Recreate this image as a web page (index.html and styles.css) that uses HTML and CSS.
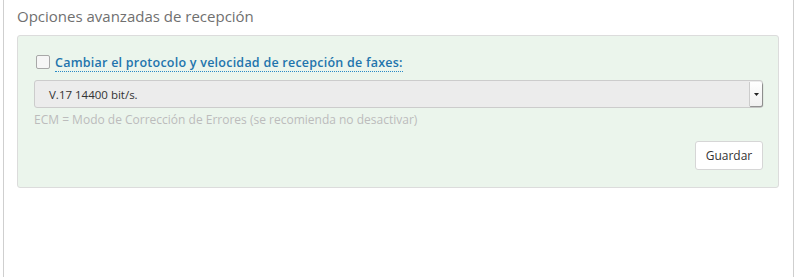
FILE: index.html
```html
<!DOCTYPE html>
<html lang="es">
<head>
<meta charset="utf-8">
<link rel="stylesheet" href="styles.css">
</head>
<body>
<div class="panel">
  <h3 class="title">Opciones avanzadas de recepción</h3>
  <div class="well">
    <div class="check-row">
      <span class="checkbox"></span>
      <span class="label">Cambiar el protocolo y velocidad de recepción de faxes:</span>
    </div>
    <div class="select">
      <span class="select-value">V.17 14400 bit/s.</span>
      <span class="select-btn"><svg width="5" height="3" viewBox="0 0 5 3"><path d="M0 0H5L2.5 3Z" fill="#222"/></svg></span>
    </div>
    <p class="help">ECM = Modo de Corrección de Errores (se recomienda no desactivar)</p>
    <div class="actions">
      <button class="btn">Guardar</button>
    </div>
  </div>
</div>
</body>
</html>
```
FILE: styles.css
```css
html, body {
  margin: 0;
  padding: 0;
  background: #fff;
  font-family: "Open Sans", "Liberation Sans", sans-serif;
}
.panel {
  margin-left: 3px;
  width: 791px;
  height: 277px;
  border-left: 1px solid #cfcfcf;
  border-right: 1px solid #cfcfcf;
  padding: 0 13px;
  box-sizing: border-box;
}
.title {
  margin: 0;
  padding-top: 6px;
  height: 29px;
  box-sizing: border-box;
  font-size: 15px;
  font-weight: 400;
  color: #707070;
  line-height: 20px;
}
.well {
  margin-top: 6px;
  width: 762px;
  box-sizing: border-box;
  background: #ebf5ec;
  border: 1px solid #dcdcdc;
  border-radius: 3px;
  padding: 19px 15px 15px 16px;
  height: 153px;
}
.check-row {
  display: flex;
  align-items: center;
  height: 16px;
}
.checkbox {
  width: 12px;
  height: 12px;
  border: 1px solid #a8a8a8;
  border-radius: 2px;
  background: #f6f6f6;
  margin-left: 2px;
  margin-right: 5px;
  margin-top: -3px;
}
.label {
  font-size: 12.5px;
  font-weight: 600;
  color: #2274ad;
  border-bottom: 1px dotted #2a8ac6;
  line-height: 15px;
  letter-spacing: 0.24px;
  padding-bottom: 1px;
}
.select {
  margin-top: 9px;
  height: 28px;
  box-sizing: border-box;
  background: #ececec;
  border: 1px solid #cccccc;
  border-radius: 3px;
  display: flex;
  align-items: center;
  justify-content: space-between;
}
.select-value {
  padding-left: 14px;
  font-size: 11.5px;
  color: #333;
}
.select-btn {
  width: 12px;
  height: 24px;
  background: linear-gradient(#ffffff, #f0f0f0);
  border-left: 1px solid #ccc;
  box-shadow: 1px 1px 1px #888;
  border-radius: 0 2px 2px 0;
  display: flex;
  align-items: center;
  justify-content: center;
}
.help {
  margin: 5px 0 0 0;
  font-size: 12px;
  color: #bcbcbc;
  line-height: 14px;
}
.actions {
  display: flex;
  justify-content: flex-end;
  margin-top: 14px;
}
.btn {
  width: 68px;
  height: 29px;
  background: #fff;
  border: 1px solid #d6d6d6;
  border-radius: 3px;
  font-family: "Open Sans", "Liberation Sans", sans-serif;
  font-size: 12px;
  color: #333;
  padding: 0;
}
```
